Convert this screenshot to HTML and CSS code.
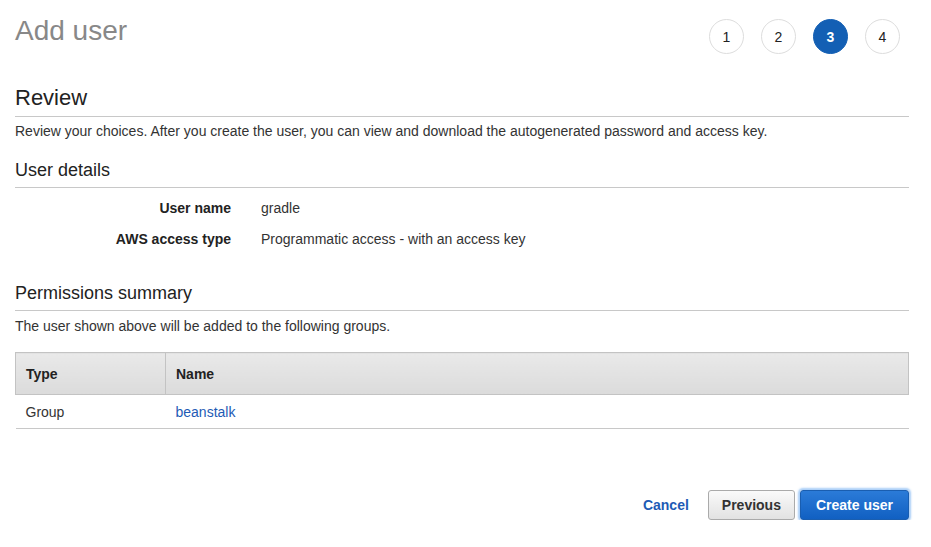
FILE: index.html
```html
<!DOCTYPE html>
<html lang="en">
<head>
    <meta charset="UTF-8">
    <meta name="viewport" content="width=device-width, initial-scale=1.0">
    <title>Add user</title>
    <link rel="stylesheet" href="styles.css">
</head>
<body>
    <div class="page">
        <header class="top">
            <h1>Add user</h1>
            <ol class="steps">
                <li>1</li>
                <li>2</li>
                <li class="active">3</li>
                <li>4</li>
            </ol>
        </header>

        <section class="review">
            <h2>Review</h2>
            <p>Review your choices. After you create the user, you can view and download the autogenerated password and access key.</p>
        </section>

        <section class="details">
            <h3>User details</h3>
            <dl>
                <div class="row">
                    <dt>User name</dt>
                    <dd>gradle</dd>
                </div>
                <div class="row">
                    <dt>AWS access type</dt>
                    <dd>Programmatic access - with an access key</dd>
                </div>
            </dl>
        </section>

        <section class="permissions">
            <h3>Permissions summary</h3>
            <p>The user shown above will be added to the following groups.</p>
            <table>
                <thead>
                    <tr>
                        <th class="col-type">Type</th>
                        <th>Name</th>
                    </tr>
                </thead>
                <tbody>
                    <tr>
                        <td>Group</td>
                        <td><a href="#">beanstalk</a></td>
                    </tr>
                </tbody>
            </table>
        </section>

        <footer class="actions">
            <a href="#" class="cancel">Cancel</a>
            <button type="button" class="btn">Previous</button>
            <button type="button" class="btn primary">Create user</button>
        </footer>
    </div>
</body>
</html>
```

FILE: styles.css
```css
/* General Styles */
body {
    font-family: 'Liberation Sans', Arial, sans-serif;
    font-size: 14px;
    color: #333;
    background-color: #fff;
    margin: 0;
    padding: 0;
}

.page {
    padding: 0 22px 0 15px;
}

/* Header with step indicator */
.top {
    display: flex;
    justify-content: space-between;
    align-items: flex-start;
    height: 85px;
}

.top h1 {
    margin: 15px 0 0;
    font-size: 28px;
    font-weight: normal;
    color: #888;
}

.steps {
    list-style: none;
    display: flex;
    gap: 17px;
    margin: 19px 9px 0 0;
    padding: 0;
}

.steps li {
    width: 33px;
    height: 33px;
    border: 1px solid #ddd;
    border-radius: 50%;
    display: flex;
    align-items: center;
    justify-content: center;
    font-size: 14px;
    color: #222;
}

.steps li.active {
    background-color: #135fb4;
    border-color: #135fb4;
    color: white;
    font-weight: bold;
}

/* Sections */
h2 {
    margin: 0;
    font-size: 22px;
    font-weight: normal;
    color: #222;
    padding-bottom: 5px;
    border-bottom: 1px solid #c8c8c8;
}

h3 {
    margin: 0;
    font-size: 18px;
    font-weight: normal;
    color: #222;
    padding-bottom: 6px;
    border-bottom: 1px solid #c8c8c8;
}

.review p {
    margin: 6px 0 21px;
}

.details dl {
    margin: 12px 0 21px;
}

.details .row {
    display: flex;
    height: 31px;
}

.details dt {
    width: 216px;
    text-align: right;
    font-weight: bold;
    color: #222;
}

.details dd {
    margin: 0 0 0 30px;
}

.permissions p {
    margin: 7px 0 18px;
}

/* Groups table */
table {
    width: 100%;
    border-collapse: collapse;
}

th {
    text-align: left;
    height: 41px;
    padding: 0 10px;
    background: linear-gradient(#e9e9e9, #dbdbdb);
    border: 1px solid #c3c3c3;
    color: #222;
}

th.col-type {
    width: 129px;
}

td {
    height: 33px;
    padding: 0 10px;
    border-bottom: 1px solid #c8c8c8;
}

a {
    color: #1e5bb5;
    text-decoration: none;
}

/* Footer buttons */
.actions {
    display: flex;
    justify-content: flex-end;
    align-items: center;
    margin-top: 61px;
}

.cancel {
    font-weight: bold;
    margin-right: 19px;
}

.btn {
    font-family: 'Liberation Sans', Arial, sans-serif;
    font-size: 14px;
    font-weight: bold;
    height: 30px;
    padding: 0 13px;
    border: 1px solid #aaa;
    border-radius: 3px;
    background: linear-gradient(#fafafa, #e2e2e2);
    color: #333;
    cursor: pointer;
}

.btn.primary {
    margin-left: 5px;
    padding: 0 15px;
    border-color: #1a5eb0;
    background: linear-gradient(#2b7bd8, #1160c2);
    color: white;
    box-shadow: 0 0 2px 2px rgba(100, 165, 240, 0.55);
}
```
